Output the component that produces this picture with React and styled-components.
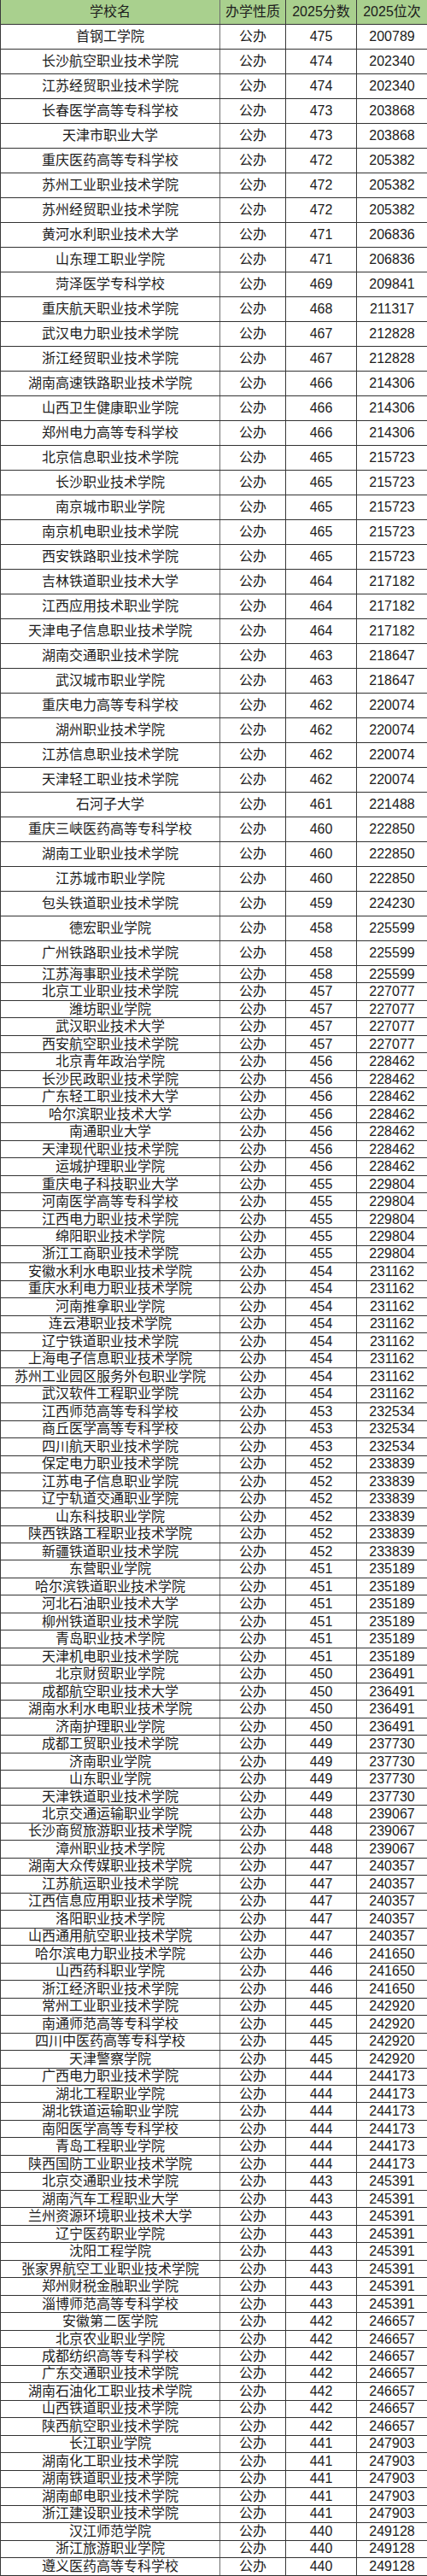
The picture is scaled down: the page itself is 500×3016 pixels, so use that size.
import React from "react";
import styled, { createGlobalStyle } from "styled-components";

const GlobalStyle = createGlobalStyle`
  html, body {
    margin: 0;
    padding: 0;
    background: #ffffff;
  }
  body {
    font-family: "Liberation Sans", "Noto Sans CJK SC", sans-serif;
  }
`;

// name|score|rank ; the first 38 rows are taller in the source sheet
const RAW = `首钢工学院|475|200789
长沙航空职业技术学院|474|202340
江苏经贸职业技术学院|474|202340
长春医学高等专科学校|473|203868
天津市职业大学|473|203868
重庆医药高等专科学校|472|205382
苏州工业职业技术学院|472|205382
苏州经贸职业技术学院|472|205382
黄河水利职业技术大学|471|206836
山东理工职业学院|471|206836
菏泽医学专科学校|469|209841
重庆航天职业技术学院|468|211317
武汉电力职业技术学院|467|212828
浙江经贸职业技术学院|467|212828
湖南高速铁路职业技术学院|466|214306
山西卫生健康职业学院|466|214306
郑州电力高等专科学校|466|214306
北京信息职业技术学院|465|215723
长沙职业技术学院|465|215723
南京城市职业学院|465|215723
南京机电职业技术学院|465|215723
西安铁路职业技术学院|465|215723
吉林铁道职业技术大学|464|217182
江西应用技术职业学院|464|217182
天津电子信息职业技术学院|464|217182
湖南交通职业技术学院|463|218647
武汉城市职业学院|463|218647
重庆电力高等专科学校|462|220074
湖州职业技术学院|462|220074
江苏信息职业技术学院|462|220074
天津轻工职业技术学院|462|220074
石河子大学|461|221488
重庆三峡医药高等专科学校|460|222850
湖南工业职业技术学院|460|222850
江苏城市职业学院|460|222850
包头铁道职业技术学院|459|224230
德宏职业学院|458|225599
广州铁路职业技术学院|458|225599
江苏海事职业技术学院|458|225599
北京工业职业技术学院|457|227077
潍坊职业学院|457|227077
武汉职业技术大学|457|227077
西安航空职业技术学院|457|227077
北京青年政治学院|456|228462
长沙民政职业技术学院|456|228462
广东轻工职业技术大学|456|228462
哈尔滨职业技术大学|456|228462
南通职业大学|456|228462
天津现代职业技术学院|456|228462
运城护理职业学院|456|228462
重庆电子科技职业大学|455|229804
河南医学高等专科学校|455|229804
江西电力职业技术学院|455|229804
绵阳职业技术学院|455|229804
浙江工商职业技术学院|455|229804
安徽水利水电职业技术学院|454|231162
重庆水利电力职业技术学院|454|231162
河南推拿职业学院|454|231162
连云港职业技术学院|454|231162
辽宁铁道职业技术学院|454|231162
上海电子信息职业技术学院|454|231162
苏州工业园区服务外包职业学院|454|231162
武汉软件工程职业学院|454|231162
江西师范高等专科学校|453|232534
商丘医学高等专科学校|453|232534
四川航天职业技术学院|453|232534
保定电力职业技术学院|452|233839
江苏电子信息职业学院|452|233839
辽宁轨道交通职业学院|452|233839
山东科技职业学院|452|233839
陕西铁路工程职业技术学院|452|233839
新疆铁道职业技术学院|452|233839
东营职业学院|451|235189
哈尔滨铁道职业技术学院|451|235189
河北石油职业技术大学|451|235189
柳州铁道职业技术学院|451|235189
青岛职业技术学院|451|235189
天津机电职业技术学院|451|235189
北京财贸职业学院|450|236491
成都航空职业技术大学|450|236491
湖南水利水电职业技术学院|450|236491
济南护理职业学院|450|236491
成都工贸职业技术学院|449|237730
济南职业学院|449|237730
山东职业学院|449|237730
天津铁道职业技术学院|449|237730
北京交通运输职业学院|448|239067
长沙商贸旅游职业技术学院|448|239067
漳州职业技术学院|448|239067
湖南大众传媒职业技术学院|447|240357
江苏航运职业技术学院|447|240357
江西信息应用职业技术学院|447|240357
洛阳职业技术学院|447|240357
山西通用航空职业技术学院|447|240357
哈尔滨电力职业技术学院|446|241650
山西药科职业学院|446|241650
浙江经济职业技术学院|446|241650
常州工业职业技术学院|445|242920
南通师范高等专科学校|445|242920
四川中医药高等专科学校|445|242920
天津警察学院|445|242920
广西电力职业技术学院|444|244173
湖北工程职业学院|444|244173
湖北铁道运输职业学院|444|244173
南阳医学高等专科学校|444|244173
青岛工程职业学院|444|244173
陕西国防工业职业技术学院|444|244173
北京交通职业技术学院|443|245391
湖南汽车工程职业大学|443|245391
兰州资源环境职业技术大学|443|245391
辽宁医药职业学院|443|245391
沈阳工程学院|443|245391
张家界航空工业职业技术学院|443|245391
郑州财税金融职业学院|443|245391
淄博师范高等专科学校|443|245391
安徽第二医学院|442|246657
北京农业职业学院|442|246657
成都纺织高等专科学校|442|246657
广东交通职业技术学院|442|246657
湖南石油化工职业技术学院|442|246657
山西铁道职业技术学院|442|246657
陕西航空职业技术学院|442|246657
长江职业学院|441|247903
湖南化工职业技术学院|441|247903
湖南铁道职业技术学院|441|247903
湖南邮电职业技术学院|441|247903
浙江建设职业技术学院|441|247903
汉江师范学院|440|249128
浙江旅游职业学院|440|249128
遵义医药高等专科学校|440|249128`;

const TALL_ROWS = 38;

const schools = RAW.split("\n").map((line) => {
  const [name, score, rank] = line.split("|");
  return { name, score, rank };
});

const Sheet = styled.div`
  width: 500px;
  box-sizing: border-box;
  border-left: 1px solid #3a3a3a;
`;

const Row = styled.div`
  display: grid;
  grid-template-columns: 257px 77px 83px 83px;
  height: ${(p) => (p.$tall ? "29px" : "20.49px")};
  box-sizing: border-box;
  border-bottom: 1px solid #333;
  background: ${(p) => (p.$head ? "#a9d08e" : "#ffffff")};
`;

const Cell = styled.div`
  display: flex;
  align-items: center;
  justify-content: center;
  box-sizing: border-box;
  border-right: 1px solid ${(p) => (p.$soft ? "#6e6e6e" : "#3a3a3a")};
  font-size: 16px;
  line-height: 1;
  color: #1c1c1c;
  white-space: nowrap;
  overflow: hidden;
`;

export default function App() {
  return (
    <>
      <GlobalStyle />
      <Sheet>
        <Row $tall $head>
          <Cell $soft>学校名</Cell>
          <Cell>办学性质</Cell>
          <Cell>2025分数</Cell>
          <Cell>2025位次</Cell>
        </Row>
        {schools.map((s, i) => (
          <Row key={s.name} $tall={i < TALL_ROWS}>
            <Cell $soft>{s.name}</Cell>
            <Cell>公办</Cell>
            <Cell>{s.score}</Cell>
            <Cell>{s.rank}</Cell>
          </Row>
        ))}
      </Sheet>
    </>
  );
}
